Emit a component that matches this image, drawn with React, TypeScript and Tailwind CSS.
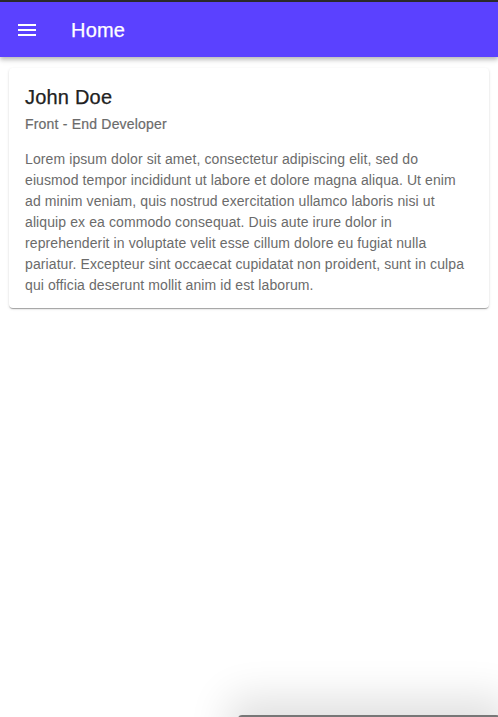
import React from "react";

export default function App() {
  return (
    <div
      className="relative h-[717px] w-full overflow-hidden bg-white"
      style={{ fontFamily: '"Liberation Sans", Arial, sans-serif' }}
    >
      <div className="h-[2px] bg-[#2b2b2b]" />
      <header className="flex h-[55px] items-center bg-[#5b41ff] shadow-[0_2px_4px_rgba(0,0,0,0.2),0_4px_5px_rgba(0,0,0,0.1)]">
        <button className="ml-[15px] flex h-6 w-6 items-center justify-center text-white">
          <svg width="24" height="24" viewBox="0 0 24 24" fill="currentColor">
            <path d="M3 18h18v-2H3v2zm0-5h18v-2H3v2zm0-7v2h18V6H3z" />
          </svg>
        </button>
        <h1 className="ml-[32px] text-[20px] leading-none tracking-[0.2px] text-white [-webkit-text-stroke:0.25px_white]">
          Home
        </h1>
      </header>
      <div className="mx-[9px] mt-[11px] rounded-[4px] bg-white px-4 pb-3 pt-4 shadow-[0_2px_1px_-1px_rgba(0,0,0,0.2),0_1px_1px_0_rgba(0,0,0,0.14),0_1px_3px_0_rgba(0,0,0,0.12)]">
        <h2 className="mt-px text-[20px] leading-[24px] tracking-[0.2px] text-[#212121] [-webkit-text-stroke:0.25px_#212121]">
          John Doe
        </h2>
        <p className="mt-[5px] text-[14px] leading-[20px] tracking-[0.2px] text-[#6b6b6b] [-webkit-text-stroke:0.2px_#6b6b6b]">
          Front - End Developer
        </p>
        <p className="mt-[15px] text-[14px] leading-[21px] tracking-[0.1px] text-[#6b6b6b]">
          Lorem ipsum dolor sit amet, consectetur adipiscing elit, sed do eiusmod tempor
          incididunt ut labore et dolore magna aliqua. Ut enim ad minim veniam, quis nostrud
          exercitation ullamco laboris nisi ut aliquip ex ea commodo consequat. Duis aute irure
          dolor in reprehenderit in voluptate velit esse cillum dolore eu fugiat nulla pariatur.
          Excepteur sint occaecat cupidatat non proident, sunt in culpa qui officia deserunt
          mollit anim id est laborum.
        </p>
      </div>
      <div className="absolute left-[238px] top-[715px] h-[60px] w-[262px] rounded-[4px] bg-[#777] shadow-[0_-8px_40px_10px_rgba(0,0,0,0.12)]" />
    </div>
  );
}
